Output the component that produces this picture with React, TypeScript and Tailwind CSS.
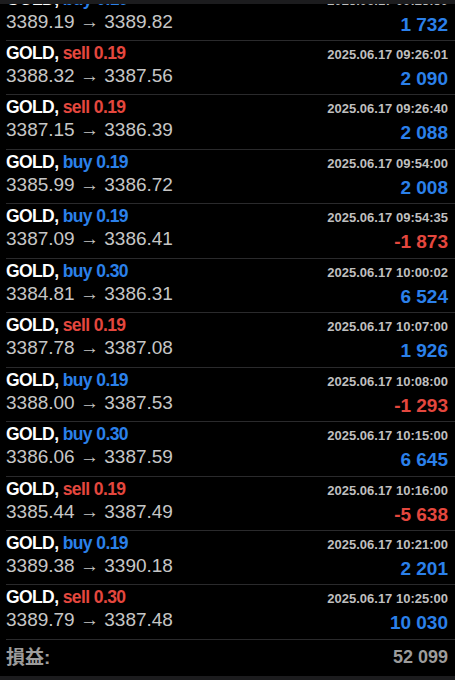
type Deal = {
  side: "buy" | "sell";
  volume: string;
  open: string;
  close: string;
  time: string;
  profit: string;
};

const deals: Deal[] = [
  { side: "buy", volume: "0.19", open: "3389.19", close: "3389.82", time: "2025.06.17 09:25:50", profit: "1 732" },
  { side: "sell", volume: "0.19", open: "3388.32", close: "3387.56", time: "2025.06.17 09:26:01", profit: "2 090" },
  { side: "sell", volume: "0.19", open: "3387.15", close: "3386.39", time: "2025.06.17 09:26:40", profit: "2 088" },
  { side: "buy", volume: "0.19", open: "3385.99", close: "3386.72", time: "2025.06.17 09:54:00", profit: "2 008" },
  { side: "buy", volume: "0.19", open: "3387.09", close: "3386.41", time: "2025.06.17 09:54:35", profit: "-1 873" },
  { side: "buy", volume: "0.30", open: "3384.81", close: "3386.31", time: "2025.06.17 10:00:02", profit: "6 524" },
  { side: "sell", volume: "0.19", open: "3387.78", close: "3387.08", time: "2025.06.17 10:07:00", profit: "1 926" },
  { side: "buy", volume: "0.19", open: "3388.00", close: "3387.53", time: "2025.06.17 10:08:00", profit: "-1 293" },
  { side: "buy", volume: "0.30", open: "3386.06", close: "3387.59", time: "2025.06.17 10:15:00", profit: "6 645" },
  { side: "sell", volume: "0.19", open: "3385.44", close: "3387.49", time: "2025.06.17 10:16:00", profit: "-5 638" },
  { side: "buy", volume: "0.19", open: "3389.38", close: "3390.18", time: "2025.06.17 10:21:00", profit: "2 201" },
  { side: "sell", volume: "0.30", open: "3389.79", close: "3387.48", time: "2025.06.17 10:25:00", profit: "10 030" },
];

function DealRow({ deal }: { deal: Deal }) {
  const loss = deal.profit.startsWith("-");
  return (
    <div className="ml-[6px] flex h-[54.45px] justify-between border-b border-[#2a2a2c] pr-[7px]">
      <div className="flex flex-col pt-[2px]">
        <div className="text-[17.5px] font-bold leading-[20px] tracking-[-0.6px] text-white">
          GOLD,{" "}
          <span className={deal.side === "buy" ? "text-[#2b80ea]" : "text-[#e4473e]"}>
            {deal.side} {deal.volume}
          </span>
        </div>
        <div className="mt-[2px] text-[19px] leading-[22px] text-[#c6c6c6]">
          {deal.open} → {deal.close}
        </div>
      </div>
      <div className="flex flex-col items-end pt-[6px]">
        <div className="text-[13px] font-bold leading-[16px] text-[#bfbfbf]">{deal.time}</div>
        <div
          className={`mt-[5px] text-[19px] font-bold leading-[22px] ${
            loss ? "text-[#e4473e]" : "text-[#2b80ea]"
          }`}
        >
          {deal.profit}
        </div>
      </div>
    </div>
  );
}

export default function App() {
  return (
    <div
      className="flex h-[680px] w-[455px] flex-col overflow-hidden bg-black"
      style={{ fontFamily: '"Liberation Sans", "Noto Sans CJK JP", Arial, sans-serif' }}
    >
      <div className="h-[4px] shrink-0 bg-[#1c1c1e]" />
      <div className="flex-1 overflow-hidden">
        <div className="mt-[-17.45px]">
          {deals.map((deal, idx) => (
            <DealRow key={idx} deal={deal} />
          ))}
          <div className="ml-[6px] flex h-[36px] items-center justify-between pr-[7px]">
            <span className="text-[19px] font-bold text-[#9c9c9c]">損益:</span>
            <span className="text-[18px] font-bold text-[#9c9c9c]">52 099</span>
          </div>
        </div>
      </div>
      <div className="h-[4px] shrink-0 bg-[#1c1c1e]" />
    </div>
  );
}
